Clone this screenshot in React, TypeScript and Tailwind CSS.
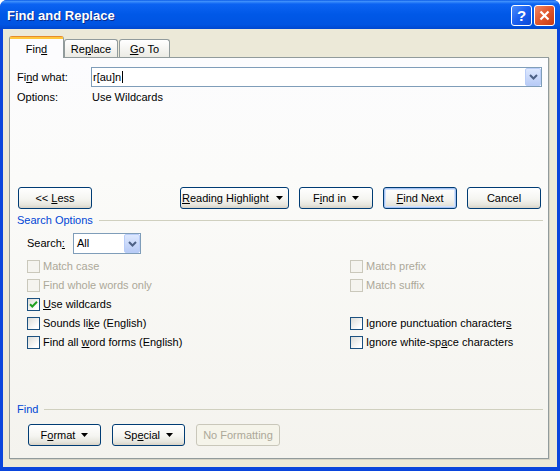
import React from "react";
import clsx from "clsx";

const U = ({ children }: { children: React.ReactNode }) => (
  <span className="underline">{children}</span>
);

const Caret = () => (
  <svg width="7" height="4" viewBox="0 0 7 4">
    <path d="M0 0h7L3.5 4z" fill="#000" />
  </svg>
);

const ComboBtn = () => (
  <div className="w-[16px] h-full rounded-[2px] border border-[#b9cdf8] bg-[linear-gradient(#dde8fe,#b8cbf6)] flex items-center justify-center shrink-0">
    <svg width="9" height="6" viewBox="0 0 9 6">
      <path d="M1 1l3.5 3.5L8 1" stroke="#4d6185" strokeWidth="2" fill="none" />
    </svg>
  </div>
);

type BtnProps = {
  children: React.ReactNode;
  className?: string;
  isDefault?: boolean;
  disabled?: boolean;
};
const Btn = ({ children, className, isDefault, disabled }: BtnProps) => (
  <div
    className={clsx(
      "h-[22px] rounded-[3px] border flex items-center justify-center shrink-0",
      disabled
        ? "border-[#c9c7ba] text-[#aca899] bg-[#f5f4ea]"
        : "border-[#003c74] bg-[linear-gradient(#ffffff,#f5f5f1_55%,#e6e5dd_85%,#d8d2c6)]",
      isDefault &&
        "shadow-[inset_0_0_0_1px_#a6c3f3,inset_0_0_0_2px_#d2e2fb]",
      className
    )}
  >
    {children}
  </div>
);

type CheckProps = {
  label: React.ReactNode;
  checked?: boolean;
  disabled?: boolean;
};
const Check = ({ label, checked, disabled }: CheckProps) => (
  <div className="flex items-center h-[19px]">
    <div
      className={clsx(
        "w-[13px] h-[13px] border flex items-center justify-center",
        disabled
          ? "border-[#cac8bb] bg-[#f5f4ef]"
          : "border-[#1c5180] bg-[linear-gradient(135deg,#dcdcd7,#ffffff_80%)]"
      )}
    >
      {checked && (
        <svg width="11" height="11" viewBox="0 0 11 11">
          <path
            d="M2 5.2l2.3 2.3L9 2.8"
            stroke="#21a121"
            strokeWidth="2"
            fill="none"
          />
        </svg>
      )}
    </div>
    <span className={clsx("ml-[3px]", disabled && "text-[#aca899]")}>
      {label}
    </span>
  </div>
);

const GroupHeader = ({ title, className }: { title: string; className?: string }) => (
  <div className={clsx("flex items-center h-[14px] leading-[14px]", className)}>
    <span className="text-[#0046d5]">{title}</span>
    <div className="flex-1 h-px bg-[#d0d0bf] ml-[6px] mr-[5px]" />
  </div>
);

export default function App() {
  return (
    <div className="w-[560px] h-[471px] flex flex-col bg-[#0a45dc] rounded-t-[7px] overflow-hidden font-['Liberation_Sans',Arial,sans-serif] text-[11px] text-black">
      {/* title bar */}
      <div className="h-[29px] shrink-0 flex items-center pl-[7px] pr-[5px] pt-[2px] bg-[linear-gradient(#0a5ae6_0%,#3d8ffb_5%,#0b63f2_14%,#0058e7_50%,#0054e2_85%,#0047cf_100%)]">
        <span className="flex-1 font-bold text-[13px] text-white [text-shadow:1px_1px_#0b2b8a]">
          Find and Replace
        </span>
        <div className="flex gap-[2px]">
          <div className="w-[21px] h-[21px] rounded-[3px] border border-white bg-[linear-gradient(135deg,#4d8dfb,#1a5ff0_50%,#0b49d6)] flex items-center justify-center text-white font-bold text-[15px] leading-none">
            ?
          </div>
          <div className="w-[21px] h-[21px] rounded-[3px] border border-white bg-[linear-gradient(135deg,#f08866,#e25a30_45%,#c63a12)] flex items-center justify-center">
            <svg width="11" height="11" viewBox="0 0 11 11">
              <path d="M1.5 1.5l8 8M9.5 1.5l-8 8" stroke="#fff" strokeWidth="2.2" />
            </svg>
          </div>
        </div>
      </div>

      {/* body */}
      <div className="flex-1 mx-[3px] mb-[4px] bg-[#ece9d8] pt-[7px] pl-[6px] pb-[8px] flex flex-col">
        <div className="flex items-end h-[21px]">
          <div className="relative z-10 -mb-px h-[22px] w-[55px] rounded-t-[3px] border-x border-t border-[#919b9c] border-t-[#e68b2c] bg-[#fcfcfe] flex flex-col">
            <div className="h-[2px] bg-[#ffc73c]" />
            <div className="flex-1 flex items-center justify-center pt-[2px]">
              <span>
                Fin<U>d</U>
              </span>
            </div>
          </div>
          <div className="h-[18px] w-[54px] rounded-t-[3px] border border-b-0 border-[#919b9c] bg-[linear-gradient(#ffffff,#ecebe5)] flex items-center justify-center pt-[2px]">
            <span>
              Re<U>p</U>lace
            </span>
          </div>
          <div className="ml-px h-[18px] w-[51px] rounded-t-[3px] border border-b-0 border-[#919b9c] bg-[linear-gradient(#ffffff,#ecebe5)] flex items-center justify-center pt-[2px]">
            <span>
              <U>G</U>o To
            </span>
          </div>
        </div>

        <div className="flex-1 w-[540px] border border-[#919b9c] shadow-[1px_1px_0_#d5d2c4] bg-[linear-gradient(#fcfcfe,#fbfbf9_30%,#f4f3ee)] flex flex-col pl-[7px] pt-[9px]">
          <div className="flex items-center h-[20px]">
            <div className="w-[74px]">
              Fi<U>n</U>d what:
            </div>
            <div className="w-[451px] h-full border border-[#7f9db9] bg-white flex items-center">
              <div className="flex-1 pl-[1px] flex items-center">
                <span>r[au]n</span>
                <span className="inline-block w-px h-[12px] bg-black ml-px" />
              </div>
              <ComboBtn />
            </div>
          </div>

          <div className="flex h-[14px] leading-[14px] mt-[3px]">
            <div className="w-[75px]">Options:</div>
            <div>Use Wildcards</div>
          </div>

          <div className="flex mt-[83px] ml-[1px]">
            <Btn className="w-[74px]">
              <span>
                &lt;&lt; <U>L</U>ess
              </span>
            </Btn>
            <Btn className="w-[109px] ml-[88px] !justify-between pl-[1px] pr-[5px]">
              <span>
                <U>R</U>eading Highlight
              </span>
              <Caret />
            </Btn>
            <Btn className="w-[74px] ml-[10px] gap-[6px]">
              <span>
                F<U>i</U>nd in
              </span>
              <Caret />
            </Btn>
            <Btn className="w-[74px] ml-[10px]" isDefault>
              <span>
                <U>F</U>ind Next
              </span>
            </Btn>
            <Btn className="w-[74px] ml-[10px]">
              <span>Cancel</span>
            </Btn>
          </div>

          <GroupHeader title="Search Options" className="mt-[4px]" />

          <div className="flex items-center h-[21px] mt-[6px] ml-[10px]">
            <div className="w-[46px]">
              Search<U>:</U>
            </div>
            <div className="w-[68px] h-full border border-[#7f9db9] bg-white flex items-center">
              <div className="flex-1 pl-[3px]">All</div>
              <ComboBtn />
            </div>
          </div>

          <div className="grid grid-cols-[323px_1fr] mt-[3px] ml-[10px]">
            <Check label="Match case" disabled />
            <Check label="Match prefix" disabled />
            <Check label="Find whole words only" disabled />
            <Check label="Match suffix" disabled />
            <Check
              label={
                <>
                  <U>U</U>se wildcards
                </>
              }
              checked
            />
            <div />
            <Check
              label={
                <>
                  Sounds li<U>k</U>e (English)
                </>
              }
            />
            <Check
              label={
                <>
                  Ignore punctuation character<U>s</U>
                </>
              }
            />
            <Check
              label={
                <>
                  Find all <U>w</U>ord forms (English)
                </>
              }
            />
            <Check
              label={
                <>
                  Ignore white-sp<U>a</U>ce characters
                </>
              }
            />
          </div>

          <GroupHeader title="Find" className="mt-[50px]" />

          <div className="flex gap-[11px] mt-[8px] ml-[11px]">
            <Btn className="w-[73px] gap-[6px]">
              <span>
                F<U>o</U>rmat
              </span>
              <Caret />
            </Btn>
            <Btn className="w-[73px] gap-[6px]">
              <span>
                Sp<U>e</U>cial
              </span>
              <Caret />
            </Btn>
            <Btn className="w-[84px]" disabled>
              <span>No Formatting</span>
            </Btn>
          </div>
        </div>
      </div>
    </div>
  );
}
